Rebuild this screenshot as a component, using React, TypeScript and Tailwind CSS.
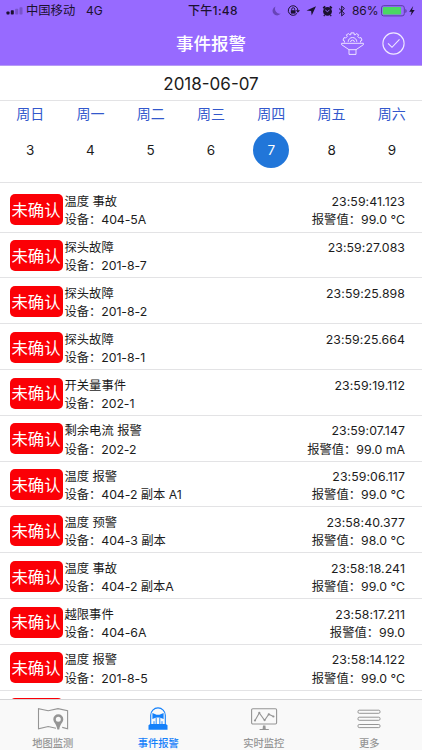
import { useState } from "react";
import { clsx } from "clsx";

type Alarm = {
  title: string;
  device: string;
  time: string;
  value?: string;
};

const weekDays = [
  { label: "周日", day: 3 },
  { label: "周一", day: 4 },
  { label: "周二", day: 5 },
  { label: "周三", day: 6 },
  { label: "周四", day: 7 },
  { label: "周五", day: 8 },
  { label: "周六", day: 9 },
];

const alarms: Alarm[] = [
  { title: "温度 事故", device: "404-5A", time: "23:59:41.123", value: "99.0 °C" },
  { title: "探头故障", device: "201-8-7", time: "23:59:27.083" },
  { title: "探头故障", device: "201-8-2", time: "23:59:25.898" },
  { title: "探头故障", device: "201-8-1", time: "23:59:25.664" },
  { title: "开关量事件", device: "202-1", time: "23:59:19.112" },
  { title: "剩余电流 报警", device: "202-2", time: "23:59:07.147", value: "99.0 mA" },
  { title: "温度 报警", device: "404-2 副本 A1", time: "23:59:06.117", value: "99.0 °C" },
  { title: "温度 预警", device: "404-3 副本", time: "23:58:40.377", value: "98.0 °C" },
  { title: "温度 事故", device: "404-2 副本A", time: "23:58:18.241", value: "99.0 °C" },
  { title: "越限事件", device: "404-6A", time: "23:58:17.211", value: "99.0" },
  { title: "温度 报警", device: "201-8-5", time: "23:58:14.122", value: "99.0 °C" },
];

const StatusBar = () => (
  <div className="flex h-[21px] items-center pl-[6px] pr-[4px] pt-px text-[12px] leading-none text-[#1b1130]">
    <svg width="18" height="8" viewBox="0 0 18 8" fill="#1b1130">
      <rect x="0.5" y="4.5" width="3" height="3" rx="0.7" />
      <rect x="4.8" y="3.2" width="3" height="4.3" rx="0.7" />
      <rect x="9.2" y="1.8" width="3" height="5.7" rx="0.7" opacity="0.25" />
      <rect x="13.5" y="0.3" width="3" height="7.2" rx="0.7" opacity="0.25" />
    </svg>
    <span className="ml-[2px] w-[60px] text-[12.3px]">中国移动</span>
    <span className="w-[102px]">4G</span>
    <span className="w-[83px] whitespace-nowrap font-medium tracking-[0.3px]">下午1:48</span>
    <svg width="75" height="12" viewBox="0 0 75 12" fill="none" stroke="#1b1130">
      {/* do not disturb */}
      <path d="M4.5 1.5a4.6 4.6 0 1 0 5.3 7.1A5 5 0 0 1 4.5 1.5z" fill="#6844b8" stroke="none" />
      {/* rotation lock */}
      <path d="M26.1 8.2a4.8 4.8 0 1 1 .8-2.6" />
      <path d="M24.8 5.2h4.2l-2.1 2.6z" fill="#1b1130" stroke="none" />
      <rect x="19.8" y="5.2" width="4.8" height="3.4" fill="#1b1130" stroke="none" />
      <path d="M20.7 5.3V4.2a1.5 1.5 0 0 1 3 0v1.1" strokeWidth="0.9" />
      {/* location */}
      <path d="M45 1.2l-4.3 9.3-.6-4.5-4.6-.5z" fill="#1b1130" stroke="none" />
      {/* alarm clock */}
      <circle cx="56.5" cy="6.4" r="4.4" fill="#1b1130" stroke="none" />
      <path d="M52.2 3.2l2-1.8M60.8 3.2l-2-1.8" strokeWidth="1.8" />
      <path d="M53.6 10l-.8 1.2M59.4 10l.8 1.2" strokeWidth="1.2" />
      <path d="M54.3 5l2.3 1.8 1.8-2" stroke="#976aff" strokeWidth="0.9" />
      {/* bluetooth */}
      <path d="M68 3.5l5.4 5-2.7 2.4V1.1l2.7 2.4-5.4 5" strokeWidth="1" />
    </svg>
    <span className="ml-[6px] w-[29px] text-[12px] tracking-[-0.1px]">86%</span>
    <svg width="36" height="12" viewBox="0 0 36 12">
      <rect x="0.5" y="0.7" width="22.8" height="10.2" rx="2.2" fill="none" stroke="#5b3ba6" />
      <rect x="1.8" y="2" width="18.3" height="7.6" rx="1" fill="#4bd763" />
      <path d="M24.3 4v4q1.4-.6 1.4-2t-1.4-2z" fill="#5b3ba6" />
      <path d="M32.2.9l-4 5.9h2.5l-1.2 4.3 4.2-6h-2.6z" fill="#1b1130" />
    </svg>
  </div>
);

const FilterIcon = () => (
  <svg width="23" height="23" viewBox="0 0 23 23" fill="none" stroke="#efe8ff" strokeWidth="0.95" strokeLinejoin="round">
    <path d="M3.4 10.5V8.8L2 8.2l1-2.6 1.7.4 1.5-1.5-.8-1.7 2.2-1.2 1.2 1.3 1.1-.3V.9h3.2v1.7l1.1.3 1.2-1.3 2.2 1.2-.8 1.7L18.3 6l1.7-.4 1 2.6-1.4.6v1.7" />
    <path d="M7.2 9.8a4.3 4.3 0 0 1 8.6 0M9.6 10a1.9 1.9 0 0 1 3.8 0" />
    <path d="M.6 11.3h21.8v1.4L15 17.7v4.7H8v-4.7L.6 12.7zM8 17.7h7" />
  </svg>
);

const CheckIcon = () => (
  <svg width="23" height="23" viewBox="0 0 23 23" fill="none" stroke="#efe8ff" strokeWidth="1.1">
    <circle cx="11.5" cy="11.5" r="10.6" />
    <path d="M6 11.3l4 4 7.5-7.9" />
  </svg>
);

const MapIcon = () => (
  <svg width="32" height="24" viewBox="0 0 32 24" fill="none" stroke="currentColor" strokeWidth="1.1">
    <path d="M19 21.2l-7.8-1.7-9.7 2.2V1.6l9.7 2.2L21 1.6l9.6 2.2v17.9l-5.4-1.3" />
    <path
      d="M21.3 7.2a5 5 0 0 0-5 5c0 3 3.6 5.2 4 10.3h2c.4-5.1 4-7.3 4-10.3a5 5 0 0 0-5-5zm0 2.5a2.5 2.5 0 1 1 0 5 2.5 2.5 0 0 1 0-5z"
      fill="currentColor"
      fillRule="evenodd"
      stroke="none"
    />
  </svg>
);

const SirenIcon = () => (
  <svg width="22" height="24" viewBox="0 0 22 24" fill="none" stroke="currentColor">
    <path d="M3.7 18V8.2a7.3 7.3 0 0 1 14.6 0V18" strokeWidth="1.1" />
    <path d="M5.4 6l4.2 1.7h2.8L16.6 6v6l-3.9-1.6h-3.4L5.4 12z" fill="currentColor" stroke="none" />
    <path d="M9.2 10.5V17M12.8 10.5V17M7 14.2V17M15 14.2V17" strokeWidth="0.9" />
    <path d="M1.5 18.2l1.7-1.2h15.6l1.7 1.2v4.5h-19z" fill="currentColor" stroke="none" />
  </svg>
);

const MonitorIcon = () => (
  <svg width="28" height="24" viewBox="0 0 28 24" fill="none" stroke="currentColor" strokeWidth="1.1">
    <rect x="1.6" y="1.7" width="25" height="15.3" rx="1.2" />
    <path d="M5 13.5l4.3-7.6 5.3 7.3 4.2-5.9 4.6 2.2" />
    <g fill="currentColor" stroke="none">
      <circle cx="5" cy="13.5" r="1.1" />
      <circle cx="9.3" cy="5.9" r="1.1" />
      <circle cx="14.6" cy="13.1" r="1.1" />
      <circle cx="18.8" cy="7.4" r="1.1" />
      <circle cx="23.4" cy="9.5" r="1.1" />
      <path d="M13 18.5h2.4l.4 3.5h3v1H9.6v-1h3z" />
    </g>
  </svg>
);

const MoreIcon = () => (
  <svg width="24" height="24" viewBox="0 0 24 24" fill="none" stroke="currentColor" strokeWidth="1">
    <rect x="1" y="3.2" width="22" height="3.1" rx="1.2" />
    <rect x="1" y="10.2" width="22" height="3.1" rx="1.2" />
    <rect x="1" y="17.5" width="22" height="3.1" rx="1.2" />
  </svg>
);

const tabs = [
  { id: "map", label: "地图监测", icon: <MapIcon /> },
  { id: "alarm", label: "事件报警", icon: <SirenIcon /> },
  { id: "monitor", label: "实时监控", icon: <MonitorIcon /> },
  { id: "more", label: "更多", icon: <MoreIcon /> },
];

const AlarmRow = ({ alarm }: { alarm: Alarm }) => (
  <li className="flex h-[45.82px] shrink-0 border-b border-[#e3e3e5] pl-[9.5px] pr-[17px] pt-[7.6px]">
    <div className="flex h-[31px] w-[53px] shrink-0 items-center justify-center rounded-[5px] bg-[#fb0006] pt-px text-[16.4px] leading-none text-white">
      未确认
    </div>
    <div className="-mt-px ml-[2px] flex-1 whitespace-nowrap text-[12.3px] leading-[18.2px]">
      <p>{alarm.title}</p>
      <p className="tracking-[-0.05px]">设备：{alarm.device}</p>
    </div>
    <div className="-mt-px whitespace-nowrap text-right text-[12.3px] leading-[18.2px]">
      <p className="tracking-[0.08px]">{alarm.time}</p>
      {alarm.value && <p>报警值：{alarm.value}</p>}
    </div>
  </li>
);

const App = () => {
  const [selectedDay, setSelectedDay] = useState(7);
  const [activeTab, setActiveTab] = useState("alarm");

  return (
    <div className="flex h-[750px] w-[422px] flex-col overflow-hidden bg-white font-['Inter','Noto_Sans_CJK_SC',sans-serif] text-[#1c1c1c]">
      <header className="h-[66px] shrink-0 border-b border-[#b69bf5] bg-[#976aff]">
        <StatusBar />
        <div className="grid h-[44px] grid-cols-[1fr_auto_1fr] items-center">
          <span />
          <h1 className="pt-px text-[17.5px] font-medium leading-none text-white">事件报警</h1>
          <div className="flex justify-end gap-[18px] pr-[17px]">
            <button type="button" aria-label="筛选">
              <FilterIcon />
            </button>
            <button type="button" aria-label="确认">
              <CheckIcon />
            </button>
          </div>
        </div>
      </header>

      <div className="flex h-[35px] shrink-0 items-center justify-center border-b border-[#e3e3e5] pt-[3px] text-[17px]">
        2018-06-07
      </div>

      <div className="grid h-[82px] shrink-0 grid-cols-7 border-b border-[#e3e3e5]">
        {weekDays.map(({ label, day }) => (
          <button
            key={day}
            type="button"
            onClick={() => setSelectedDay(day)}
            className="flex flex-col items-center pt-[2px]"
          >
            <span className="text-[14px] leading-[22px] text-[#3358cc]">{label}</span>
            <span
              className={clsx(
                "mt-[7px] flex size-9 items-center justify-center rounded-full text-[13.5px]",
                day === selectedDay && "bg-[#2176d9] text-white"
              )}
            >
              {day}
            </span>
          </button>
        ))}
      </div>

      <ul className="flex min-h-0 flex-1 flex-col overflow-hidden pt-[3.7px]">
        {alarms.map((alarm) => (
          <AlarmRow key={alarm.time} alarm={alarm} />
        ))}
        {/* top edge of the next row's badge */}
        <li className="shrink-0 pl-[9.5px] pt-[7.6px]">
          <div className="h-[31px] w-[53px] rounded-[5px] bg-[#fb0006]" />
        </li>
      </ul>

      <nav className="grid h-[51px] shrink-0 grid-cols-4 border-t border-[#d5d5d7] bg-[#f9f9f9]">
        {tabs.map((tab) => (
          <button
            key={tab.id}
            type="button"
            onClick={() => setActiveTab(tab.id)}
            className={clsx(
              "flex flex-col items-center pt-[7px]",
              tab.id === activeTab ? "text-[#1480fa]" : "text-[#959595]"
            )}
          >
            {tab.icon}
            <span className="mt-[4.5px] text-[10.3px] font-medium leading-[14px]">{tab.label}</span>
          </button>
        ))}
      </nav>
    </div>
  );
};

export default App;
